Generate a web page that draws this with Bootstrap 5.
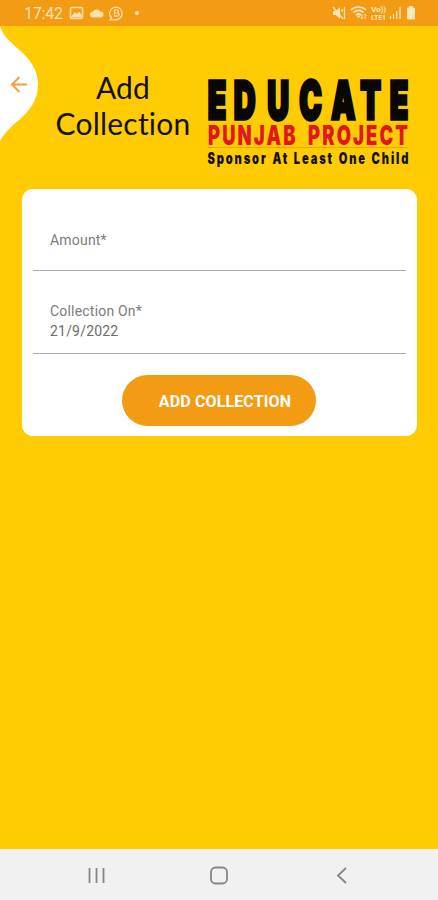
<!DOCTYPE html>
<html lang="en">
<head>
<meta charset="utf-8">
<meta name="viewport" content="width=device-width, initial-scale=1">
<title>Add Collection</title>
<link href="https://cdn.jsdelivr.net/npm/bootstrap@5.3.0/dist/css/bootstrap.min.css" rel="stylesheet">
<style>
body{background:#ffcc03;font-family:Roboto,sans-serif;height:900px;overflow:hidden}
.status-bar{height:26px;background:#f39b13;color:#ffe5ba;padding:0 22px 0 24px;font-size:16px;line-height:27px;letter-spacing:-.2px}
.status-bar svg,.hero svg,.sys-nav svg{display:block;flex:none;overflow:visible}
.hero{height:163px}
.title-text{font-family:Lato,sans-serif;font-size:30px;line-height:36px;color:#151003;width:152px;margin:43px 0 0 7px;letter-spacing:.2px}
.logo-art{margin:46px 0 0 8px}
.form-card{margin:0 21px 0 22px;height:247px;border-radius:11px;padding:0 11px}
.field-row{border-bottom:1.5px solid #aaa;padding:0 17px;color:#7c7c7c;font-size:14px;line-height:20px;letter-spacing:.2px}
.amount{height:82px;padding-top:41px}
.date{height:83px;padding-top:30px}
.date-value{color:#6c6c6c}
.add-btn,.add-btn:hover{width:194px;height:51px;background:#f39b13;color:#fff;font-weight:700;font-size:16px;padding:2px 0 0 12px;margin:21px auto 0 89px;letter-spacing:.13px}
.sys-nav{height:51px;background:#f1f1f1}
</style>
<script src="https://cdn.jsdelivr.net/npm/bootstrap@5.3.0/dist/js/bootstrap.bundle.min.js"></script>
</head>
<body class="d-flex flex-column m-0">
<header class="status-bar d-flex align-items-center justify-content-between">
  <div class="d-flex align-items-center">
    <span>17:42</span>
    <svg width="76" height="26" viewBox="63 0 76 26" fill="none" stroke="#ffe0aa" stroke-width="1.6">
      <rect x="70.5" y="7.5" width="12" height="11" rx="1.5"/><path d="M72 16l3-3.500 2 2 2-2.500 3 4v1H72z" fill="#ffe0aa" stroke-width=".8"/>
      <path d="M93 17.500a3 3 0 0 1 0-6 4.500 4.500 0 0 1 7.500 0 3 3 0 0 1 0 6z" fill="#ffe0aa" stroke="none"/>
      <path d="M111.500 18a6.300 6.300 0 1 1 3 1.600l-4.500.2z" stroke-width="1.300"/><path d="M114.500 10h2.500a1.500 1.500 0 0 1 0 3h-2.500zM114.500 13h3a1.600 1.600 0 0 1 0 3.200h-3z" stroke-width="1.200"/>
      <circle cx="137" cy="13" r="2" fill="#ffe9c4" stroke="none"/>
    </svg>
  </div>
  <svg width="84" height="26" viewBox="332 0 84 26" fill="none" stroke="#ffe5ba" stroke-width="1.300">
    <path d="M333 11h3l4-4v12l-4-4h-3z" fill="#ffe5ba" stroke="none"/><path d="M333 7l10 12M342 9v3M344.500 7v12"/>
    <path d="M351 10c4-4 11-4 15 0M353.500 12.500c3-2.500 7-2.500 10 0M356 15q2.500-2 5 0" stroke-width="1.700"/><path d="M358.500 18l-1-2h2zM362 14v5l-1.500-1.500M365 19v-5l1.500 1.500" stroke-width="1"/>
    <g fill="#ffe5ba" stroke="none" font-family="Roboto" font-weight="700" font-size="6.500"><text x="371" y="12" textLength="15" lengthAdjust="spacingAndGlyphs">Vo))</text><text x="371" y="19.500" textLength="15" lengthAdjust="spacingAndGlyphs">LTE1</text></g>
    <path d="M390.500 19v-3M393.500 19v-5M396.700 19v-8M400 19v-12"/>
    <path d="M407 8.500q0-1 1-1h1v-1.500h4v1.500h1q1 0 1 1v10q0 1-1 1h-6q-1 0-1-1z" fill="#ffe5ba" stroke="none"/>
  </svg>
</header>
<main class="flex-grow-1">
  <section class="hero d-flex align-items-start">
    <svg width="40" height="116" viewBox="0 26 40 116"><path d="M0 26C3 35 7 39 17 48C29 58 38 69 38 84C38 101 29 111 18 121C8 129 4 134 0 141Z" fill="#fff"/><path d="M27 84.500H12M19.500 77l-7.500 7.500 7.500 7.500" fill="none" stroke="#f0a043" stroke-width="2"/></svg>
    <h1 class="title-text fw-normal text-center">Add<br>Collection</h1>
    <svg class="logo-art" width="205" height="98" viewBox="207 72 205 98" font-family="Inter,sans-serif" font-weight="900">
      <g fill="#080703" stroke="#080703" font-size="52">
        <text transform="translate(0 118.500) scale(.58 1)" x="358 403 461 516 571 621 672" stroke-width="3.500">EDUCATE</text>
      </g>
      <text transform="translate(208 144.700) scale(.68 1)" font-size="27" fill="#e3151d" textLength="294" word-spacing="7">PUNJAB PROJECT</text>
      <path d="M208 147.500H408" stroke="#e0ad00"/>
      <text transform="translate(207.500 164) scale(.72 1)" font-size="15.500" fill="#151003" textLength="279" word-spacing="1">Sponsor At Least One Child</text>
    </svg>
  </section>
  <form class="form-card card border-0">
    <label class="field-row amount">Amount*</label>
    <div class="field-row date mt-0"><div>Collection On*</div><div class="date-value">21/9/2022</div></div>
    <button type="button" class="btn add-btn rounded-pill border-0">ADD COLLECTION</button>
  </form>
</main>
<nav class="sys-nav d-flex">
  <svg width="438" height="51" viewBox="0 849 438 51" fill="none" stroke="#858585" stroke-width="1.800"><path d="M89.500 868v15M96.500 868v15M103.500 868v15M346 868l-8 7.500 8 7.500"/><rect x="211" y="867.500" width="16" height="16" rx="4.500"/></svg>
</nav>
</body>
</html>
